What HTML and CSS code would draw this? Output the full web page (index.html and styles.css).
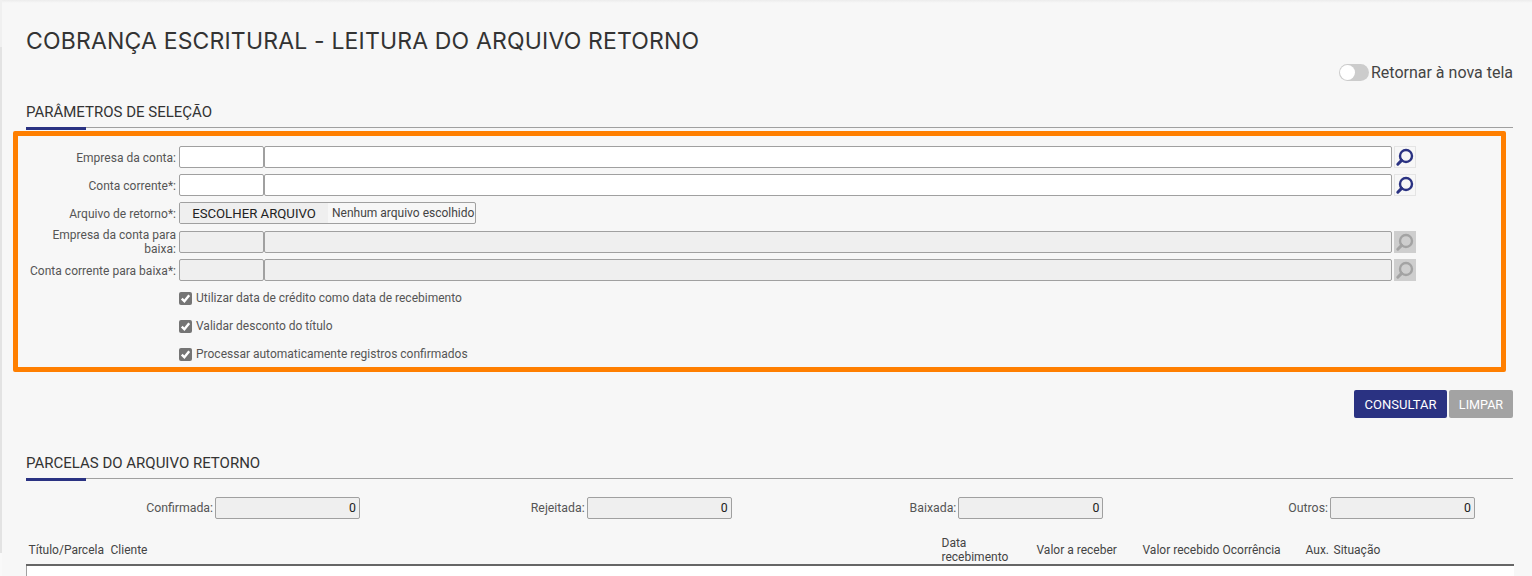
FILE: index.html
```html
<!DOCTYPE html>
<html lang="pt-BR">
<head>
<meta charset="utf-8">
<title>Cobrança Escritural</title>
<link rel="stylesheet" href="styles.css">
</head>
<body>
<svg class="sprite" width="0" height="0" aria-hidden="true">
  <symbol id="lupa" viewBox="1 1 20 20">
    <circle cx="12" cy="10" r="6" fill="none" stroke="currentColor" stroke-width="2.4"/>
    <path d="M7.6 14.4 L3.8 18.2" fill="none" stroke="currentColor" stroke-width="3" stroke-linecap="round"/>
  </symbol>
</svg>
<main class="page">
  <h1 class="title">COBRANÇA ESCRITURAL - LEITURA DO ARQUIVO RETORNO</h1>
  <div class="toggle-row">
    <span class="toggle"><span class="knob"></span></span>
    <span class="toggle-label">Retornar à nova tela</span>
  </div>
  <h2 class="section section-first">PARÂMETROS DE SELEÇÃO</h2>
  <form class="params">
    <label class="lbl">Empresa da conta:</label>
    <div class="ctl"><input class="in code"><input class="in name"><button type="button" class="lookup"><svg><use href="#lupa"/></svg></button></div>
    <label class="lbl">Conta corrente*:</label>
    <div class="ctl"><input class="in code"><input class="in name"><button type="button" class="lookup"><svg><use href="#lupa"/></svg></button></div>
    <label class="lbl">Arquivo de retorno*:</label>
    <div class="ctl"><div class="file"><span class="file-btn">ESCOLHER ARQUIVO</span><span class="file-name">Nenhum arquivo escolhido</span></div></div>
    <label class="lbl lbl-wrap">Empresa da conta para baixa:</label>
    <div class="ctl"><input class="in code" disabled><input class="in name" disabled><button type="button" class="lookup off"><svg><use href="#lupa"/></svg></button></div>
    <label class="lbl">Conta corrente para baixa*:</label>
    <div class="ctl"><input class="in code" disabled><input class="in name" disabled><button type="button" class="lookup off"><svg><use href="#lupa"/></svg></button></div>
    <span></span>
    <div class="chk"><span class="box"><svg viewBox="0 0 14 14"><path d="M3 7.2 L5.8 10 L11 3.6" fill="none" stroke="#fff" stroke-width="2.6"/></svg></span>Utilizar data de crédito como data de recebimento</div>
    <span></span>
    <div class="chk"><span class="box"><svg viewBox="0 0 14 14"><path d="M3 7.2 L5.8 10 L11 3.6" fill="none" stroke="#fff" stroke-width="2.6"/></svg></span>Validar desconto do título</div>
    <span></span>
    <div class="chk"><span class="box"><svg viewBox="0 0 14 14"><path d="M3 7.2 L5.8 10 L11 3.6" fill="none" stroke="#fff" stroke-width="2.6"/></svg></span>Processar automaticamente registros confirmados</div>
  </form>
  <div class="actions">
    <button type="button" class="btn primary">CONSULTAR</button>
    <button type="button" class="btn muted">LIMPAR</button>
  </div>
  <h2 class="section section-second">PARCELAS DO ARQUIVO RETORNO</h2>
  <div class="totals">
    <div class="total"><span>Confirmada:</span><output class="num">0</output></div>
    <div class="total"><span>Rejeitada:</span><output class="num">0</output></div>
    <div class="total"><span>Baixada:</span><output class="num">0</output></div>
    <div class="total"><span>Outros:</span><output class="num">0</output></div>
  </div>
  <table class="grid">
    <colgroup>
      <col class="c1"><col class="c2"><col class="c3"><col class="c4"><col class="c5"><col class="c6"><col class="c7"><col class="c8">
    </colgroup>
    <thead>
      <tr>
        <th>Título/Parcela</th><th>Cliente</th><th>Data recebimento</th><th>Valor a receber</th><th class="nowrap">Valor recebido</th><th>Ocorrência</th><th>Aux.</th><th>Situação</th>
      </tr>
    </thead>
    <tbody><tr><td colspan="8"></td></tr></tbody>
  </table>
</main>
</body>
</html>
```
FILE: styles.css
```css
* { box-sizing: border-box; }
html, body { margin: 0; height: 100%; overflow: hidden; }
body {
  background: #f7f7f7;
  font-family: Roboto, "Liberation Sans", sans-serif;
  font-size: 12px;
  color: #444;
}
.sprite { position: absolute; }
.page {
  height: 576px;
  overflow: hidden;
  padding: 0 19px 0 26px;
  background:
    linear-gradient(to bottom, #f0f0f0 47px, #e3e3e3 47px, #e3e3e3 553px, #f9f9f9 553px) left top / 2px 100% no-repeat,
    linear-gradient(to bottom, #ececec, #f7f7f7) left top / 100% 3px no-repeat;
}
.title {
  margin: 0;
  padding-top: 27px;
  font-family: Inter, "Open Sans", sans-serif;
  font-weight: 400;
  font-size: 23px;
  letter-spacing: 0.17px;
  line-height: 28px;
  color: #333;
  white-space: nowrap;
}
.toggle-row {
  display: flex;
  justify-content: flex-end;
  align-items: center;
  gap: 2px;
  margin-top: 7px;
  height: 20px;
  font-size: 16px;
  color: #444;
}
.toggle {
  width: 30px;
  height: 17px;
  border-radius: 9px;
  background: #ccc;
  padding: 1px;
}
.knob {
  display: block;
  width: 15px;
  height: 15px;
  border-radius: 50%;
  background: #fff;
}
.section {
  margin: 0;
  font-weight: 400;
  font-size: 15px;
  line-height: 20px;
  color: #333;
  border-bottom: 1px solid #a0a0a0;
  position: relative;
}
.section::after {
  content: "";
  position: absolute;
  left: 0;
  bottom: -3px;
  width: 60px;
  height: 3px;
  background: #2a3282;
}
.section-first { margin-top: 19px; padding-top: 1px; height: 27px; }
.section-second { margin-top: 32px; padding-top: 3px; height: 29px; }
.params {
  margin: 3px 7px 0 -13px;
  height: 241px;
  border: 5px solid #ff7f00;
  border-radius: 2px;
  padding: 10px 0 0;
  display: grid;
  grid-template-columns: 158px 1fr;
  grid-template-rows: 28px 28px 29px 28px 28px 28px 28px 28px;
  column-gap: 3px;
  width: 1493px;
}
.lbl {
  display: flex;
  align-items: center;
  justify-content: flex-end;
  text-align: right;
  height: 22px;
  line-height: 14px;
  padding: 1px 0 0 8px;
  color: #555;
  letter-spacing: 0.02px;
}
.lbl-wrap { padding-top: 0; }
.ctl { display: flex; align-items: flex-start; }
.in {
  height: 22px;
  border: 1px solid #a0a0a0;
  border-radius: 2px;
  background: #fff;
  padding: 0 3px;
  margin: 0;
}
.in:disabled { background: #efefef; }
.code { width: 85px; }
.name { width: 1128px; }
.lookup {
  width: 22px;
  height: 22px;
  margin: 0 0 0 2px;
  padding: 0;
  background: #f7f7f7;
  border: 1px solid #e4e4e4;
  color: #2a3282;
}
.lookup svg { display: block; width: 20px; height: 20px; }
.lookup.off { background: #cecece; border-color: #cecece; color: #a3a3a3; }
.file {
  display: flex;
  height: 22px;
  width: 297px;
  border: 1px solid #a0a0a0;
  border-radius: 2px;
  overflow: hidden;
  align-items: center;
}
.file-btn {
  width: 148px;
  height: 100%;
  background: #efefef;
  color: #222;
  font-size: 13.2px;
  display: flex;
  align-items: center;
  justify-content: center;
}
.file-name { padding-left: 4px; white-space: nowrap; color: #444; }
.chk { display: flex; align-items: flex-start; gap: 4px; height: 22px; line-height: 14px; padding-top: 4px; color: #555; }
.box {
  width: 13px;
  height: 13px;
  margin-top: 1px;
  border-radius: 2px;
  background: #757575;
  display: block;
}
.box svg { display: block; width: 13px; height: 13px; }
.actions {
  display: flex;
  justify-content: flex-end;
  gap: 2px;
  margin-top: 18px;
}
.btn {
  height: 28px;
  border: 0;
  border-radius: 2px;
  font-family: Roboto, "Liberation Sans", sans-serif;
  font-size: 13px;
  color: #fff;
  padding: 0;
}
.primary { background: #2a3282; width: 93px; }
.muted { background: #a3a3a3; width: 64px; font-size: 12.6px; }
.totals {
  display: grid;
  grid-template-columns: 334px repeat(3, 371.67px);
  margin-top: 18px;
}
.total { display: flex; justify-content: flex-end; align-items: center; gap: 2px; color: #555; font-size: 12.3px; }
.num {
  display: block;
  width: 145px;
  height: 22px;
  line-height: 20px;
  border: 1px solid #a0a0a0;
  border-radius: 2px;
  background: #efefef;
  text-align: right;
  padding-right: 3px;
  color: #222;
}
.grid {
  width: 1487px;
  margin-top: 16px;
  border-collapse: collapse;
  table-layout: fixed;
}
.grid th {
  font-weight: 400;
  font-size: 12px;
  line-height: 14px;
  height: 30px;
  text-align: left;
  padding: 0 2px;
  color: #444;
  vertical-align: middle;
  border-bottom: 2px solid #666;
}
.grid th.nowrap { white-space: nowrap; }
.grid td { background: #fff; height: 40px; border-left: 1px solid #a0a0a0; }
.c1 { width: 82px; }
.c2 { width: 831px; }
.c3 { width: 95px; }
.c4 { width: 106px; }
.c5 { width: 80px; }
.c6 { width: 83px; }
.c7 { width: 28px; }
.c8 { width: 182px; }
```
